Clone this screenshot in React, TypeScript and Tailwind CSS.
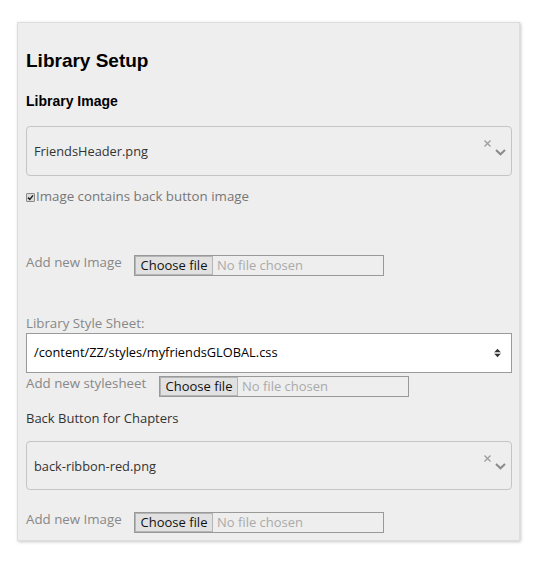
import React from 'react';

const body = { fontFamily: '"Open Sans", "Noto Sans", sans-serif' };

function ClearChevron() {
  return (
    <div className="flex items-center h-full">
      <svg width="7" height="7" viewBox="0 0 7 7" className="self-start mt-[13px]">
        <path d="M0.5 0.5 L6.5 6.5 M6.5 0.5 L0.5 6.5" stroke="#9a9a9a" strokeWidth="1.2" fill="none" />
      </svg>
      <svg width="11" height="7" viewBox="0 0 11 7" className="ml-[4px] mt-[2px]">
        <path d="M1 1 L5.5 5.3 L10 1" stroke="#8a8a8a" strokeWidth="2" fill="none" />
      </svg>
    </div>
  );
}

function ImageSelect({ value, height }: { value: string; height: string }) {
  return (
    <div className={`flex items-center ${height} w-full border border-[#c4c4c4] rounded-[4px] bg-[#eeeeee] pl-[7px] pr-[5px]`}>
      <span className="flex-1 mt-[2px] text-[12.8px] text-[#333]">{value}</span>
      <ClearChevron />
    </div>
  );
}

function FileInput() {
  return (
    <div className="flex items-stretch w-[250px] h-[21px] border border-[#999] bg-[#eeeeee] text-[13px] leading-[19px]">
      <span className="w-[78px] flex items-center justify-center bg-[#e1e1e1] border border-[#b5b5b5] text-[#111]">
        Choose file
      </span>
      <span className="pl-[4px] flex items-center text-[#aaaaaa]">No file chosen</span>
    </div>
  );
}

function AddRow({ label, width }: { label: string; width: string }) {
  return (
    <div className="flex items-start">
      <span className={`${width} shrink-0 text-[13.3px] leading-[15px] text-[#888]`}>{label}</span>
      <FileInput />
    </div>
  );
}

export default function App() {
  return (
    <div className="min-h-screen bg-white pt-[22px] pl-[17px]" style={body}>
      <div className="w-[503px] bg-[#eeeeee] border border-[#dddddd] shadow-[1px_1px_3px_rgba(0,0,0,0.22)] pt-[26px] pl-[8px] pr-[7px] pb-[7px]">
        <h2
          className="text-[19px] leading-[24px] font-bold text-black"
          style={{ fontFamily: '"Liberation Sans", Arial, sans-serif' }}
        >
          Library Setup
        </h2>

        <h3
          className="mt-[18px] text-[14px] leading-[20px] font-bold text-black"
          style={{ fontFamily: '"Liberation Sans", Arial, sans-serif' }}
        >
          Library Image
        </h3>

        <div className="mt-[15px]">
          <ImageSelect value="FriendsHeader.png" height="h-[50px]" />
        </div>

        <label className="mt-[11px] flex items-center h-[20px] text-[13.3px] text-[#777]">
          <span className="w-[9px] h-[9px] mr-[1px] flex items-center justify-center bg-[#dcdcdc] border border-[#8a8a8a] rounded-[1px]">
            <svg width="7" height="7" viewBox="0 0 7 7">
              <path d="M1 3.6 L2.8 5.4 L6 1.4" stroke="#222" strokeWidth="1.5" fill="none" />
            </svg>
          </span>
          Image contains back button image
        </label>

        <div className="mt-[48px]">
          <AddRow label="Add new Image" width="w-[108px]" />
        </div>

        <div className="mt-[37px] text-[13.3px] leading-[20px] text-[#888]">Library Style Sheet:</div>
        <div className="flex items-center h-[40px] w-full border border-[#9a9a9a] bg-white pl-[7px] pr-[10px]">
          <span className="flex-1 text-[12.8px] text-black">/content/ZZ/styles/myfriendsGLOBAL.css</span>
          <svg width="7" height="10" viewBox="0 0 7 10">
            <path d="M0.5 4 L3.5 0.8 L6.5 4 Z M0.5 6 L3.5 9.2 L6.5 6 Z" fill="#333" />
            <path d="M0 5 H7" stroke="#777" strokeWidth="0.8" />
          </svg>
        </div>

        <div className="mt-[3px]">
          <AddRow label="Add new stylesheet" width="w-[133px]" />
        </div>

        <div className="mt-[11px] text-[13px] leading-[20px] text-[#333]">Back Button for Chapters</div>

        <div className="mt-[13px]">
          <ImageSelect value="back-ribbon-red.png" height="h-[49px]" />
        </div>

        <div className="mt-[22px]">
          <AddRow label="Add new Image" width="w-[108px]" />
        </div>
      </div>
    </div>
  );
}
